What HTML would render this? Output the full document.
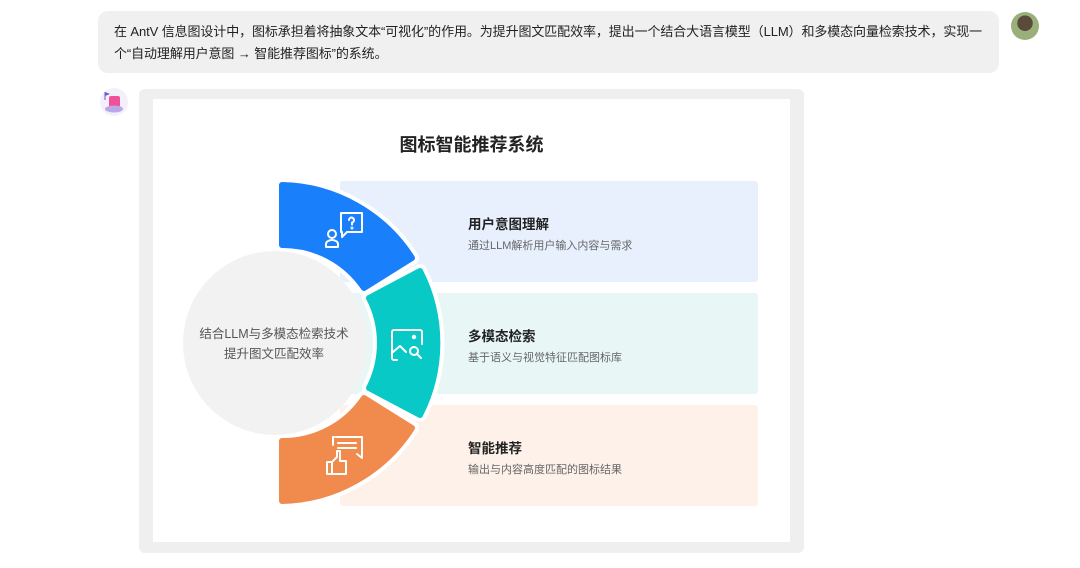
<!DOCTYPE html>
<html><head><meta charset="utf-8"><style>
body{margin:0;width:1080px;height:568px;background:#fff;font-family:"Liberation Sans","Noto Sans CJK SC",sans-serif;position:relative;overflow:hidden}
.bubble{position:absolute;left:98px;top:11px;width:901px;height:62px;background:#f0f0f0;border-radius:10px;box-sizing:border-box;padding:10px 8px 10px 16px;font-size:13px;line-height:22px;color:#222;letter-spacing:-0.1px}
.av{position:absolute;left:1011px;top:12px;width:28px;height:28px;border-radius:50%;background:radial-gradient(circle at 50% 40%,#5a4a3a 0 35%,#9ab07a 36%)}
.bot{position:absolute;left:100px;top:88px;width:28px;height:28px;border-radius:50%;background:#f4f0fa}
.frame{position:absolute;left:139px;top:89px;width:665px;height:464px;background:#efefef;border-radius:6px}
.inner{position:absolute;left:153px;top:99px;width:637px;height:443px;background:#fff}
.t{position:absolute;font-size:13.5px;font-weight:bold;color:#222}
.d{position:absolute;font-size:11px;color:#666}
</style></head><body>
<div class="bubble">在 AntV 信息图设计中，图标承担着将抽象文本“可视化”的作用。为提升图文匹配效率，提出一个结合大语言模型（LLM）和多模态向量检索技术，实现一个“自动理解用户意图 → 智能推荐图标”的系统。</div>
<div class="av"></div>
<div class="bot"><svg width="28" height="28"><rect x="9" y="8" width="11" height="11" rx="2" fill="#f0509a"/><ellipse cx="14" cy="21" rx="9" ry="3.5" fill="#b9a7e8"/><path d="M5 4 L5 12" stroke="#6a5acd"/><path d="M5 4 L10 6 L5 8Z" fill="#6a5acd"/></svg></div>
<div class="frame"></div>
<div class="inner"></div>
<div style="position:absolute;left:0;width:943px;top:131px;text-align:center;font-size:18px;font-weight:bold;color:#222">图标智能推荐系统</div>
<svg style="position:absolute;left:0;top:0" width="1080" height="568">
<rect x="340" y="181" width="418" height="101" rx="3" fill="#e8f0fe"/>
<rect x="340" y="293" width="418" height="101" rx="3" fill="#e8f7f6"/>
<rect x="340" y="405" width="418" height="101" rx="3" fill="#fdf1ea"/>
<g stroke-linejoin="round" stroke-width="14" fill="#fff" stroke="#fff">
<path d="M282 185 A158 158 0 0 1 412 258 L364 288 A98 98 0 0 0 282 245 Z"/>
<path d="M420 271 A158 158 0 0 1 420 415 L369 388 A98 98 0 0 0 369 298 Z"/>
<path d="M412 428 A158 158 0 0 1 282 501 L282 441 A98 98 0 0 0 364 398 Z"/>
</g>
<circle cx="275" cy="343" r="92" fill="#f2f2f2"/>
<g stroke-linejoin="round" stroke-width="6">
<path d="M282 185 A158 158 0 0 1 412 258 L364 288 A98 98 0 0 0 282 245 Z" fill="#1a7ffa" stroke="#1a7ffa"/>
<path d="M420 271 A158 158 0 0 1 420 415 L369 388 A98 98 0 0 0 369 298 Z" fill="#09c9c6" stroke="#09c9c6"/>
<path d="M412 428 A158 158 0 0 1 282 501 L282 441 A98 98 0 0 0 364 398 Z" fill="#f08a4d" stroke="#f08a4d"/>
</g>
<g fill="none" stroke="#fff" stroke-width="2" stroke-linecap="round" stroke-linejoin="round">
<circle cx="332" cy="234" r="4"/><path d="M326 247 v-3 a6 4 0 0 1 12 0 v3 z"/>
<path d="M341 213 h21 v19 h-15 l-5 5 v-5 h-1 z"/><path d="M349 220 a2.5 2.5 0 1 1 3 2.5 v2"/><circle cx="352" cy="228" r=".5"/>
<path d="M397 360 h-3 a2 2 0 0 1 -2 -2 v-26 a2 2 0 0 1 2 -2 h26 a2 2 0 0 1 2 2 v12"/><path d="M393 352 l7 -6 l6 6"/><circle cx="414" cy="337" r="1.2"/><circle cx="414" cy="351" r="4"/><path d="M417 354 l4 4"/>
<path d="M333 445 v-8 h29 v21 l-5 -4"/><path d="M338 443 h18 M338 448 h18"/><path d="M327 462 h5 v12 h-5z"/><path d="M332 462 l5 -5 v-6 l3 0 v10 h6 v13 h-14"/>
</g>
<text x="274" y="338" text-anchor="middle" font-size="12.5" fill="#555" font-family="Liberation Sans,Noto Sans CJK SC,sans-serif">结合LLM与多模态检索技术</text>
<text x="274" y="358" text-anchor="middle" font-size="12.5" fill="#555" font-family="Liberation Sans,Noto Sans CJK SC,sans-serif">提升图文匹配效率</text>
</svg>
<div class="t" style="left:468px;top:213px">用户意图理解</div>
<div class="d" style="left:468px;top:237px">通过LLM解析用户输入内容与需求</div>
<div class="t" style="left:468px;top:325px">多模态检索</div>
<div class="d" style="left:468px;top:349px">基于语义与视觉特征匹配图标库</div>
<div class="t" style="left:468px;top:437px">智能推荐</div>
<div class="d" style="left:468px;top:461px">输出与内容高度匹配的图标结果</div>
</body></html>
